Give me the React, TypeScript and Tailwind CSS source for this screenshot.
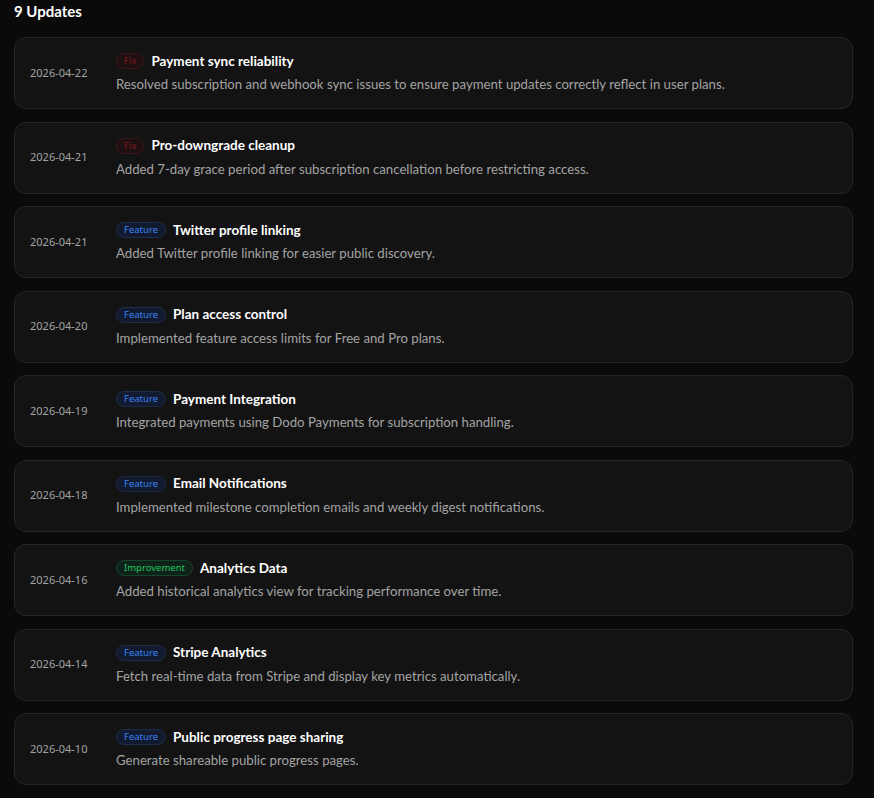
import React from "react";

type Kind = "Fix" | "Feature" | "Improvement";

interface Entry {
  date: string;
  kind: Kind;
  title: string;
  body: string;
}

const entries: Entry[] = [
  { date: "2026-04-22", kind: "Fix", title: "Payment sync reliability", body: "Resolved subscription and webhook sync issues to ensure payment updates correctly reflect in user plans." },
  { date: "2026-04-21", kind: "Fix", title: "Pro-downgrade cleanup", body: "Added 7-day grace period after subscription cancellation before restricting access." },
  { date: "2026-04-21", kind: "Feature", title: "Twitter profile linking", body: "Added Twitter profile linking for easier public discovery." },
  { date: "2026-04-20", kind: "Feature", title: "Plan access control", body: "Implemented feature access limits for Free and Pro plans." },
  { date: "2026-04-19", kind: "Feature", title: "Payment Integration", body: "Integrated payments using Dodo Payments for subscription handling." },
  { date: "2026-04-18", kind: "Feature", title: "Email Notifications", body: "Implemented milestone completion emails and weekly digest notifications." },
  { date: "2026-04-16", kind: "Improvement", title: "Analytics Data", body: "Added historical analytics view for tracking performance over time." },
  { date: "2026-04-14", kind: "Feature", title: "Stripe Analytics", body: "Fetch real-time data from Stripe and display key metrics automatically." },
  { date: "2026-04-10", kind: "Feature", title: "Public progress page sharing", body: "Generate shareable public progress pages." },
];

const badgeStyles: Record<Kind, string> = {
  Fix: "bg-[#1e0f10] border-[#3a1718] text-[#7f1d1d]",
  Feature: "bg-[#111a2e] border-[#1e2c4a] text-[#3b82f6]",
  Improvement: "bg-[#0f2219] border-[#16452d] text-[#22c55e]",
};

function Badge({ kind }: { kind: Kind }) {
  return (
    <span
      className={`inline-flex h-[16px] items-center rounded-full border px-[7px] font-['Noto_Sans',sans-serif] text-[9.5px] leading-none ${badgeStyles[kind]}`}
    >
      {kind}
    </span>
  );
}

export default function App() {
  return (
    <div
      className="min-h-[798px] bg-[#0a0a0a] pl-[14px] pr-[21px] pt-[1px]"
      style={{ fontFamily: 'Lato, "Noto Sans", sans-serif' }}
    >
      <h2 className="text-[15px] font-bold leading-[20px] text-white">9 Updates</h2>
      <div className="mt-[16px] flex flex-col gap-[12.5px]">
        {entries.map((e, i) => (
          <div
            key={i}
            className="flex h-[72px] items-center rounded-[12px] border border-[#262626] bg-[#131313] pl-[15px]"
          >
            <div className="w-[86px] shrink-0 font-['Noto_Sans',sans-serif] text-[11px] text-[#a3a3a3]">
              {e.date}
            </div>
            <div className="flex flex-col gap-[4px]">
              <div className="flex items-center gap-[7px]">
                <Badge kind={e.kind} />
                <span className="text-[13.5px] font-bold text-white">{e.title}</span>
              </div>
              <p className="text-[13.2px] text-[#a3a3a3]">{e.body}</p>
            </div>
          </div>
        ))}
      </div>
    </div>
  );
}
